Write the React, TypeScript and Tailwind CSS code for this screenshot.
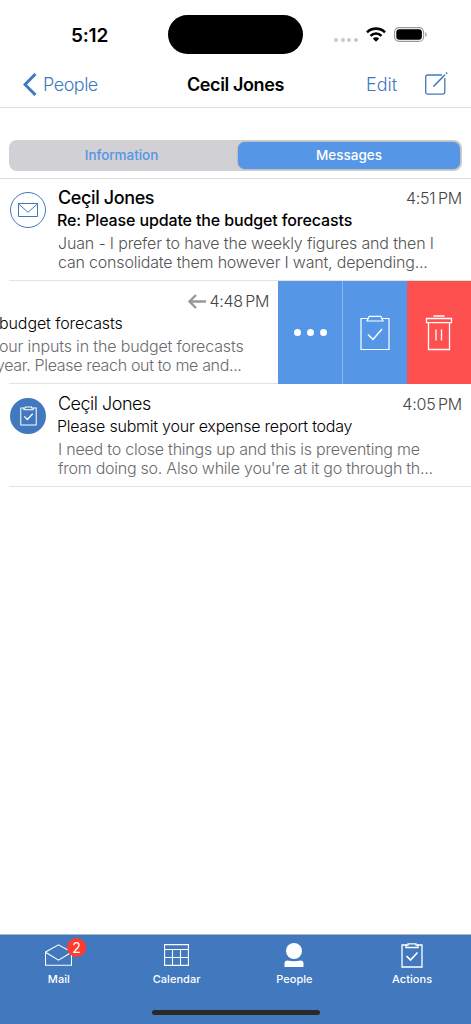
import React from 'react';

interface IconProps {
  className?: string;
}

interface Message {
  id: number;
  sender: string;
  subject: string;
  preview: React.ReactNode;
  time: string;
  unread?: boolean;
  icon: React.ReactNode;
}

const ClipboardIcon: React.FC<IconProps> = ({ className }) => (
  <svg className={className} viewBox="0 0 30 36" fill="none" stroke="currentColor" strokeWidth="1.2">
    <path d="M8 3.5H1v31h28v-31h-7" />
    <path d="M7 6l2.2-4.7h11.6L23 6z" />
    <path d="M8 19.5l5 5 9-10.5" strokeWidth="1.5" />
  </svg>
);

const SmallClipboardIcon: React.FC<IconProps> = ({ className }) => (
  <svg className={className} viewBox="0 0 22 25" fill="none" stroke="currentColor" strokeWidth="1.3">
    <path d="M5 2H1v22h20V2h-4" />
    <path d="M5 4.5V2h2V.8h8V2h2v2.5z" />
    <path d="M5.5 13l4 4 7-7.5" strokeWidth="1.7" />
  </svg>
);

const TrashIcon: React.FC<IconProps> = ({ className }) => (
  <svg className={className} viewBox="0 0 28 36" fill="none" stroke="currentColor" strokeWidth="1.3">
    <path d="M8.5 1h11M1.5 3.5h25v4.2h-25zM3.5 8v26.500h21V8M11 14.500v11M16.500 14.500v11" />
  </svg>
);

const MESSAGES: Message[] = [
  {
    id: 1,
    sender: 'Ceçil Jones',
    subject: 'Re: Please update the budget forecasts',
    preview: (
      <>
        <p className="tracking-[-0.16px]">Juan - I prefer to have the weekly figures and then I</p>
        <p className="tracking-[-0.19px]">can consolidate them however I want, depending...</p>
      </>
    ),
    time: '4:51 PM',
    unread: true,
    icon: (
      <div className="flex h-9 w-9 items-center justify-center rounded-full border border-[#4178be] text-[#4178be]">
        <svg className="h-[14px] w-5" viewBox="0 0 20 14" fill="none" stroke="currentColor">
          <path d="M.5.5h19v13H.5zM.5.8L10 9.3 19.5.8" />
        </svg>
      </div>
    ),
  },
  {
    id: 2,
    sender: 'Ceçil Jones',
    subject: 'Please submit your expense report today',
    preview: (
      <>
        <p className="tracking-[-0.22px]">I need to close things up and this is preventing me</p>
        <p className="tracking-[-0.25px]">from doing so. Also while you're at it go through th...</p>
      </>
    ),
    time: '4:05 PM',
    icon: (
      <div className="flex h-9 w-9 items-center justify-center rounded-full bg-[#4178be] text-white">
        <SmallClipboardIcon className="h-5 w-[17px]" />
      </div>
    ),
  },
];

const MessageRow: React.FC<{ message: Message }> = ({ message }) => (
  <div className="flex h-[103px] pl-[10px]">
    <div className="w-12 shrink-0 pt-[14px]">{message.icon}</div>
    <div className="min-w-0 flex-1 whitespace-nowrap pt-[10px]">
      <div className="flex h-5 items-center justify-between pr-[9px]">
        <span
          className={
            message.unread
              ? 'text-[18px] font-medium leading-5 tracking-[-0.38px]'
              : 'text-[18px] font-light leading-5 tracking-[-0.5px]'
          }
        >
          {message.sender}
        </span>
        <span className="text-[16px] font-light leading-5 tracking-[-0.2px] text-[#444] [word-spacing:-1.8px]">{message.time}</span>
      </div>
      <div
        className={
          message.unread
            ? '-ml-px mt-[2px] text-[16px] font-medium leading-5 tracking-[-0.13px]'
            : '-ml-px mt-[2px] text-[16px] font-light leading-5 tracking-[-0.23px]'
        }
      >
        {message.subject}
      </div>
      <div className={message.unread ? 'mt-[4px] text-[16px] font-light leading-[19px] text-[#555]' : 'mt-[4px] text-[16px] font-light leading-[19px] text-[#6b6b6b]'}>
        {message.preview}
      </div>
    </div>
  </div>
);

// Row dragged to the left, uncovering its actions
const SwipedRow: React.FC = () => (
  <div className="flex h-[103px]">
    <div className="w-[278px] overflow-hidden whitespace-nowrap pt-[10px]">
      <div className="flex h-5 items-center justify-end pr-[9px]">
        <svg className="mr-[4px] h-[15px] w-[18px] text-[#999]" viewBox="0 0 18 15" fill="none" stroke="currentColor" strokeWidth="2.4">
          <path d="M18 7.5H1.8M8 1L1.5 7.5 8 14" />
        </svg>
        <span className="text-[16px] font-light leading-5 tracking-[-0.3px] text-[#444] [word-spacing:-1.8px]">4:48 PM</span>
      </div>
      <div className="-ml-px mt-[2px] text-[16px] font-light leading-5 tracking-[-0.1px]">budget forecasts</div>
      <div className="mt-[4px] text-[16px] font-light leading-[19px] text-[#6b6b6b]">
        <p className="-ml-px tracking-[-0.15px]">our inputs in the budget forecasts</p>
        <p className="-ml-1 tracking-[-0.33px]">year. Please reach out to me and...</p>
      </div>
    </div>
    <button className="flex w-16 items-center justify-center gap-[6px] bg-[#5596e6]">
      <span className="h-[7px] w-[7px] rounded-full bg-white" />
      <span className="h-[7px] w-[7px] rounded-full bg-white" />
      <span className="h-[7px] w-[7px] rounded-full bg-white" />
    </button>
    <button className="flex w-[65px] items-center justify-center border-l border-[#88b6ee] bg-[#5596e6] text-white">
      <ClipboardIcon className="h-9 w-[30px]" />
    </button>
    <button className="flex w-16 items-center justify-center bg-[#ff5050] text-white">
      <TrashIcon className="h-9 w-7" />
    </button>
  </div>
);

const Divider: React.FC = () => <div className="-mt-px ml-[9px] h-px bg-[#e2e2e2]" />;

const TABS = [
  {
    label: 'Mail',
    badge: 2,
    icon: (
      <svg className="h-[22px] w-[27px]" viewBox="0 0 27 22" fill="none" stroke="currentColor" strokeWidth="1.1">
        <path d="M.5 8L13.5.8 26.5 8v13.3H.5zM.5 8.2l13 8 13-8" />
      </svg>
    ),
  },
  {
    label: 'Calendar',
    icon: (
      <svg className="h-[22px] w-[25px]" viewBox="0 0 25 22" fill="none" stroke="currentColor" strokeWidth="1.1">
        <path d="M.6.6h23.8v20.8H.6zM.6 5.5h23.8M.6 13.5h23.8M8.5 5.5v16M16.5 5.5v16" />
      </svg>
    ),
  },
  {
    label: 'People',
    icon: (
      <svg className="h-[24px] w-[20px]" viewBox="0 0 20 24" fill="currentColor">
        <circle cx="10" cy="8" r="8" />
        <path d="M.5 24v-3.5a3 3 0 0 1 3-3c4 1 9 1 13 0a3 3 0 0 1 3 3V24z" />
      </svg>
    ),
  },
  { label: 'Actions', icon: <SmallClipboardIcon className="h-[25px] w-[22px]" /> },
];

const App: React.FC = () => {
  return (
    <div className="flex h-[1024px] w-[471px] flex-col overflow-hidden bg-white font-['Inter',sans-serif] text-black">
      {/* Status bar */}
      <div className="flex h-[60px] shrink-0 pt-[15px]">
        <div className="flex h-[39px] w-[168px] items-center pl-[71px] pt-[3px] text-[19px] font-semibold tracking-[-0.2px]">5:12</div>
        <div className="h-[39px] w-[135px] rounded-full bg-black" />
        <div className="flex h-[39px] items-center pl-[31px]">
          <div className="mt-[11px] flex gap-[2.5px]">
            <span className="h-1 w-1 rounded-full bg-[#c8c8c8]" />
            <span className="h-1 w-1 rounded-full bg-[#c8c8c8]" />
            <span className="h-1 w-1 rounded-full bg-[#c8c8c8]" />
            <span className="h-1 w-1 rounded-full bg-[#c8c8c8]" />
          </div>
          <svg className="ml-2 h-[15px] w-5" viewBox="0 0 20 15" fill="none" stroke="currentColor" strokeWidth="2.6">
            <path d="M1 5.3a12.8 12.8 0 0 1 18 0M4.5 8.8a7.8 7.8 0 0 1 11 0" />
            <path d="M10 14.8l-3.2-3.3a4.6 4.6 0 0 1 6.4 0z" fill="currentColor" stroke="none" />
          </svg>
          <svg className="ml-2 h-[15px] w-[33px]" viewBox="0 0 33 15" fill="none">
            <rect x=".6" y=".6" width="29" height="13.8" rx="4.5" stroke="#999" strokeWidth="1.1" />
            <rect x="2.3" y="2.3" width="25.6" height="10.4" rx="3" fill="#000" />
            <path d="M31.3 5c1.8.8 1.8 4.2 0 5z" fill="#999" />
          </svg>
        </div>
      </div>

      {/* Navigation bar */}
      <header className="flex h-12 shrink-0 items-center border-b border-[#dedede] pt-[2px] text-[18px] text-[#4178be]">
        <button className="flex w-[187px] items-center pl-[23px] font-light">
          <svg className="mr-[6px] h-[23px] w-[14px]" viewBox="0 0 14 23" fill="none" stroke="currentColor" strokeWidth="3">
            <path d="M12.5 1L2 11.5 12.5 22" />
          </svg>
          <span className="tracking-[-0.5px]">People</span>
        </button>
        <h1 className="w-[179px] font-semibold tracking-[-0.4px] text-black">Cecil Jones</h1>
        <button className="w-[59px] text-left font-light">Edit</button>
        <svg className="mb-[3px] h-[23px] w-[23px]" viewBox="0 0 23 23" fill="none" stroke="currentColor" strokeWidth="1.3">
          <path d="M17 3H2.5A1.8 1.8 0 0 0 .7 4.8v15.5a1.8 1.8 0 0 0 1.8 1.8H18a1.8 1.8 0 0 0 1.8-1.8V6" />
          <path d="M8.5 14.5L20 2.8M21 1.8l1.2-1.2" strokeWidth="1.6" />
        </svg>
      </header>

      {/* Segmented control */}
      <div className="shrink-0 border-b border-[#dedede] px-[9px] pb-[7px] pt-8">
        <div className="flex h-[31px] rounded-[8px] bg-[#d0d0d5] p-[2px] text-[13.5px] font-medium">
          <button className="w-[227px] pr-[6px] tracking-[-0.05px] text-[#5596e6]">Information</button>
          <button className="flex-1 rounded-[7px] bg-[#5596e6] text-white shadow-[0_0_2px_rgba(0,0,0,0.3)]">Messages</button>
        </div>
      </div>

      <main className="-mt-px flex-1">
        <MessageRow message={MESSAGES[0]} />
        <Divider />
        <SwipedRow />
        <Divider />
        <MessageRow message={MESSAGES[1]} />
        <Divider />
      </main>

      {/* Tab bar */}
      <nav className="flex h-[90px] shrink-0 flex-col justify-between border-t border-[#a9b8cc] bg-[#4178be] text-white">
        <div className="grid grid-cols-4">
          {TABS.map((tab) => (
            <button key={tab.label} className="relative flex flex-col items-center pt-[7px]">
              <span className="flex h-[26px] items-center justify-center">{tab.icon}</span>
              <span className="mt-[3px] text-[11px] font-medium leading-4 tracking-[0.05px]">{tab.label}</span>
              {tab.badge && (
                <span className="absolute left-[67px] top-[3px] flex h-[19px] w-[19px] items-center justify-center rounded-full bg-[#ff3b30] text-[14px]">
                  {tab.badge}
                </span>
              )}
            </button>
          ))}
        </div>
        <div className="mx-auto mb-[9px] h-[5px] w-[168px] rounded-full bg-[#292929]" />
      </nav>
    </div>
  );
};

export default App;
